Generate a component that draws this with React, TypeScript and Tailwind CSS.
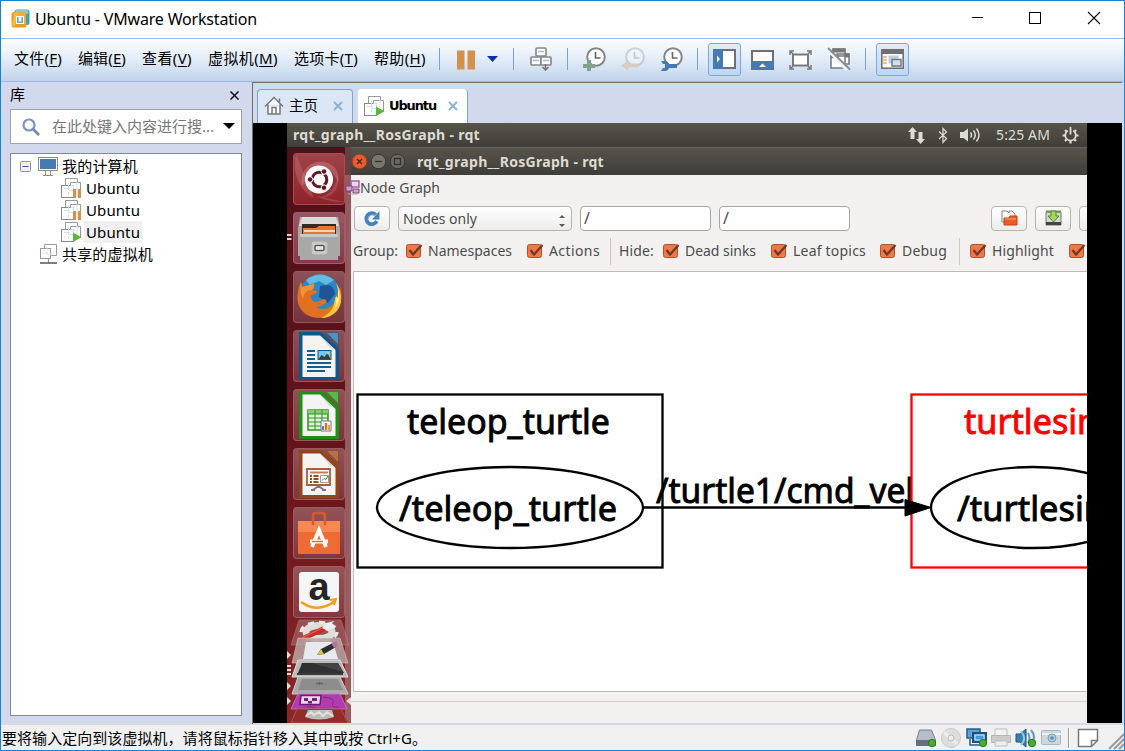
import { useLayoutEffect, useRef, type ReactNode } from "react";

/* Spreads a line of text evenly over the width that its class names set. */
function Fit({ className = "", children }: { className?: string; children: ReactNode }) {
  const box = useRef<HTMLSpanElement>(null);
  const inner = useRef<HTMLSpanElement>(null);
  useLayoutEffect(() => {
    if (!box.current || !inner.current) return;
    const count = (inner.current.textContent ?? "").length;
    inner.current.style.letterSpacing = "0px";
    const gap = box.current.clientWidth - inner.current.getBoundingClientRect().width;
    inner.current.style.letterSpacing = `${gap / Math.max(1, count)}px`;
  });
  return (
    <span ref={box} className={`block shrink-0 whitespace-nowrap ${className}`}>
      <span ref={inner}>{children}</span>
    </span>
  );
}

const WIN = "font-['Noto_Sans','Noto_Sans_CJK_SC',sans-serif]";
const CJK = "font-['Noto_Sans_CJK_SC',sans-serif]";

const menus = [
  { label: "文件", key: "F", width: "w-[48px]" },
  { label: "编辑", key: "E", width: "w-[48px]" },
  { label: "查看", key: "V", width: "w-[50px]" },
  { label: "虚拟机", key: "M", width: "w-[70px]" },
  { label: "选项卡", key: "T", width: "w-[64px]" },
  { label: "帮助", key: "H", width: "w-[52px]" },
];

function TitleBar() {
  return (
    <header className="flex h-[37px] shrink-0 items-center bg-white pl-[10px]">
      <svg className="mb-[2px]" width="19" height="20" viewBox="0 0 19 20">
        <rect x="3.500" y="0.500" width="15" height="15.500" rx="2.500" fill="#3f9fb8" />
        <rect x="4.500" y="1" width="13" height="4" rx="1.500" fill="#7fcbdc" />
        <path d="M2.500 3h3v11h10v2q0 2.500-2.500 2.500H2.500Q.5 18.500.5 16V5.500Q.5 3 2.500 3z" fill="#ec9a1d" />
        <path d="M5 3h8q2 0 2 2v10h-3V7H5z" fill="#f5ae32" />
        <path d="M1 16 3.500 3.500H6L4 18z" fill="#f8bb45" />
        <path d="M5 7h8v8H5z" fill="#fff" />
        <path d="M6 8.200h6v5.600H6z" fill="#45a5bd" />
        <path d="M7.500 8.200h3v4.300h-3z" fill="#fff" />
      </svg>
      <Fit className="mb-[2px] ml-[5px] w-[222px] text-[16px] leading-[20px] text-black">Ubuntu - VMware Workstation</Fit>
      <svg className="mb-[5px] ml-[715px]" width="131" height="17" viewBox="0 0 131 17" fill="none" stroke="#000">
        <path d="M0 8.500h11" />
        <rect x="57.500" y="3.500" width="11" height="11" />
        <path d="M116 3 128 15M128 3 116 15" strokeWidth="1.100" />
      </svg>
    </header>
  );
}

function Sep({ className }: { className: string }) {
  return <span className={`mb-[2px] h-[22px] w-px shrink-0 bg-[#7ba2d0] ${className}`} />;
}

function Clock({ faded, children }: { faded?: boolean; children: ReactNode }) {
  return (
    <g opacity={faded ? 0.3 : 1}>
      <circle cx="14" cy="10" r="8.800" fill="#fdfdfd" stroke="#858585" strokeWidth="2" />
      <path d="M13.500 5v6h5" fill="none" stroke="#666" strokeWidth="1.600" />
      {children}
    </g>
  );
}

function MenuBar() {
  return (
    <nav className="flex h-[44px] shrink-0 items-center border-y border-[#9cbbe2] bg-linear-to-b from-[#fbfdff] via-[#e2ecf8] to-[#c0d3ec] pl-[13px]">
      <div className={`mb-[4px] flex gap-[16px] text-[15px] leading-[20px] text-black ${WIN}`}>
        {menus.map((m) => (
          <Fit key={m.key} className={m.width}>
            {m.label}(<u className="underline-offset-2">{m.key}</u>)
          </Fit>
        ))}
      </div>
      <Sep className="ml-[13px]" />
      <svg className="mb-px ml-[16px] shrink-0" width="20" height="20" viewBox="0 0 20 20">
        <path d="M1 .5h7.500v19H1zM11.500.5H19v19h-7.500z" fill="#d3914b" />
      </svg>
      <svg className="mb-[3px] ml-[11px] shrink-0" width="11" height="6" viewBox="0 0 11 6">
        <path d="M0 0h11L5.500 6z" fill="#0b2fb3" />
      </svg>
      <Sep className="ml-[15px]" />
      <svg className="mb-[2px] ml-[15px] shrink-0" width="24" height="24" viewBox="0 0 24 24" fill="#fff" stroke="#858585" strokeWidth="1.600">
        <rect x="7" y="1" width="10" height="8" rx="1" />
        <rect x="2" y="10" width="10" height="8" rx="1" />
        <rect x="12" y="10" width="10" height="8" rx="1" />
        <path d="M9 4.500h6M4 13.500h6M14 13.500h6" stroke="#9dbbe0" />
        <path d="M16.500 17v6M13.500 20l3 3 3-3" fill="none" stroke="#777" />
      </svg>
      <Sep className="ml-[14px]" />
      <svg className="mb-[2px] ml-[14px] shrink-0" width="24" height="24" viewBox="0 0 24 24">
        <Clock><path d="M5 13h4v4h4v4H9v3H5v-3H1v-4h4z" fill="#80a38e" /></Clock>
      </svg>
      <svg className="mb-[2px] ml-[15px] shrink-0" width="24" height="24" viewBox="0 0 24 24">
        <Clock faded><path d="M0 18.500 7 13.500v3h10v4H7v3z" fill="#dd953e" /></Clock>
      </svg>
      <svg className="mb-[2px] ml-[14px] shrink-0" width="24" height="24" viewBox="0 0 24 24">
        <Clock>
          <path d="M2 14h4q3 0 4 3h8v4H10q-1 3-4 3H2l2-3h2v-4H4z" fill="#4279b2" />
        </Clock>
      </svg>
      <Sep className="ml-[14px]" />
      <span className="mb-[2px] ml-[10px] flex size-[33px] shrink-0 items-center justify-center rounded-[3px] border border-[#7da7dc] bg-linear-to-b from-[#e2ecfa] to-[#bdd6f8]">
        <svg width="23" height="20" viewBox="0 0 23 20">
          <rect x="1" y="1" width="21" height="18" fill="#fff" stroke="#707070" strokeWidth="2" />
          <path d="M0 0h10v20H0z" fill="#467ab2" />
          <path d="M4 6.500v7l3-3.500z" fill="#fff" />
        </svg>
      </span>
      <svg className="mb-px ml-[10px] shrink-0" width="24" height="20" viewBox="0 0 24 20">
        <rect x="1" y="1" width="21" height="18" fill="#fff" stroke="#707070" strokeWidth="2" />
        <path d="M0 11h23v9H0z" fill="#467ab2" />
        <path d="M8 17h7l-3.500-3.500z" fill="#fff" />
      </svg>
      <svg className="mb-px ml-[14px] shrink-0" width="24" height="20" viewBox="0 0 24 20" fill="none" stroke="#7a7a7a" strokeWidth="1.500">
        <rect x="4" y="4.500" width="15" height="11" fill="#fff" strokeWidth="2" />
        <path d="M1 5V1h4M1 1l3 3M18 1h4v4M22 1l-3 3M1 15v4h4M1 19l3-3M18 19h4v-4M22 19l-3-3" />
      </svg>
      <svg className="mb-[2px] ml-[14px] shrink-0" width="24" height="24" viewBox="0 0 24 24" fill="#fff" stroke="#777" strokeWidth="1.500">
        <rect x="6" y="2" width="12" height="13" />
        <path d="M5.500 3.500h13" strokeWidth="4" />
        <rect x="10" y="7" width="12" height="10" />
        <path d="M17 8.500h5.500" strokeWidth="4" />
        <rect x="4" y="9" width="14" height="12" />
        <path d="M3.500 9.500h8" strokeWidth="3.500" />
        <path d="M1 3 20 23" stroke="#eef3fa" strokeWidth="3" />
        <path d="M1 1 23 22.500" stroke="#888f98" strokeWidth="2" />
      </svg>
      <Sep className="ml-[14px]" />
      <span className="mb-[2px] ml-[10px] flex size-[33px] shrink-0 items-center justify-center rounded-[3px] border border-[#7da7dc] bg-linear-to-b from-[#e2ecfa] to-[#bdd6f8]">
        <svg width="23" height="20" viewBox="0 0 23 20">
          <rect x="0.800" y="0.800" width="21.400" height="18.400" fill="#fff" stroke="#707070" strokeWidth="1.600" />
          <path d="M0 0h23v5H0z" fill="#707070" />
          <path d="M2 8h4M2 11h4M2 14h4" stroke="#e8c58c" strokeWidth="1.800" />
          <rect x="7.500" y="6.500" width="10" height="8" fill="#b9cfe9" />
          <rect x="11" y="10.500" width="9" height="6.500" fill="#cfdff3" stroke="#777" strokeWidth="1.500" />
        </svg>
      </span>
    </nav>
  );
}

function VmIcon({ state }: { state?: "paused" | "running" }) {
  return (
    <svg className="shrink-0" width="21" height="20" viewBox="0 0 21 20" fill="none">
      <path d="M4.500 7V.5h12v4M19.500 16V4.500h-10V7" stroke="#999" />
      <rect x="0.500" y="7.500" width="12" height="12" stroke="#888" />
      <path d="M9.500 7.500h3v5h-5V4.500M3 10.500h6M16 4v8M7.500 14v3" stroke="#d3dff0" />
      {state === "paused" && <path d="M12 11h3.200v9H12zM16.800 11H20v9h-3.200z" fill="#d3914b" />}
      {state === "running" && <path d="M12 10.500v9.500l8.500-4.800z" fill="#55ba3b" />}
    </svg>
  );
}

function Library() {
  return (
    <aside className="flex w-[251px] shrink-0 flex-col bg-[#d3d9ed] pr-[10px] pl-[9px]">
      <div className="flex h-[27px] shrink-0 items-center justify-between pr-[3px] pb-[3px] text-black">
        <span className={`text-[15px] leading-[20px] ${CJK}`}>库</span>
        <svg className="mt-[3px]" width="9" height="9" viewBox="0 0 9 9"><path d="M.5.5l8 8M8.500.5l-8 8" stroke="#000" strokeWidth="1.400" /></svg>
      </div>
      <div className="flex h-[35px] shrink-0 items-center border border-[#a0a2a8] bg-white pl-[11px]">
        <svg width="18" height="18" viewBox="0 0 18 18" fill="none">
          <circle cx="7" cy="7" r="5.500" stroke="#7c93bd" strokeWidth="2.200" />
          <path d="m11 11 6 6" stroke="#7288b0" strokeWidth="2.600" />
        </svg>
        <Fit className={`mb-[2px] ml-[12px] w-[162px] text-[15px] leading-[20px] text-[#767676] ${WIN}`}>在此处键入内容进行搜...</Fit>
        <svg className="mb-[2px] ml-[9px]" width="12" height="6" viewBox="0 0 12 6"><path d="M0 0h12L6 6z" fill="#000" /></svg>
      </div>
      <div className={`mt-[9px] h-[563px] border border-[#828790] bg-white pt-px text-[15px] leading-[20px] text-black ${WIN}`}>
        <div className="flex h-[22px] items-center pl-[9px]">
          <svg width="11" height="11" viewBox="0 0 11 11"><rect x=".5" y=".5" width="10" height="10" rx="1" fill="#efefef" stroke="#919191" /><path d="M2.500 5.500h6" stroke="#3c52a0" /></svg>
          <svg className="ml-[7px]" width="20" height="19" viewBox="0 0 20 19">
            <rect x=".5" y=".5" width="19" height="13" fill="#fff" stroke="#8c8c8c" />
            <path d="M2 2h16v10H2z" fill="#467ab2" />
            <path d="M7.500 14v4M12.500 14v4M5 18.500h10" stroke="#8c8c8c" />
          </svg>
          <Fit className="ml-[4px] w-[76px]">我的计算机</Fit>
        </div>
        {(["paused", "paused", "running"] as const).map((state, i) => (
          <div key={i} className="flex h-[22px] items-center pl-[50px]">
            <VmIcon state={state} />
            <span className={state === "running" ? "ml-[2px] flex h-[22px] w-[58px] items-center bg-[#f0f0f0] pl-[2px]" : "ml-[2px] pl-[2px]"}>
              <Fit className="w-[54px]">Ubuntu</Fit>
            </span>
          </div>
        ))}
        <div className="flex h-[22px] items-center pl-[29px]">
          <svg width="18" height="20" viewBox="0 0 18 20" fill="none" stroke="#999">
            <path d="M4.500 4V.5h12v11h-5" /><rect x=".5" y="4.500" width="10" height="10" />
            <path d="M7 3v7h7M3 9h5" stroke="#dbe4f2" />
            <path d="M8.500 15v4" /><path d="M0 19h17" stroke="#555" strokeWidth="1.500" />
          </svg>
          <Fit className="ml-[4px] w-[91px]">共享的虚拟机</Fit>
        </div>
      </div>
    </aside>
  );
}

function TabClose() {
  return <svg width="10" height="10" viewBox="0 0 10 10"><path d="m1 1 8 8M9 1 1 9" stroke="#8fb3d1" strokeWidth="2" /></svg>;
}

function Tabs() {
  return (
    <div className="flex h-[40px] shrink-0 items-end gap-[5px] bg-[#d3d9ed] pl-[4px] text-black">
      <div className="flex h-[34px] w-[96px] items-center rounded-t-[4px] border border-b-0 border-[#7fa3c9] bg-[#dbe7f5] pb-[2px] pl-[6px]">
        <svg width="20" height="19" viewBox="0 0 20 19" fill="none" stroke="#777" strokeWidth="1.500">
          <path d="M1 10.500 10 1.500l9 9M4 8.500v9.500h12V8.500" fill="#f8fafc" />
          <path d="M8 18v-6.500h4V18M15.500 6V2.500" />
        </svg>
        <span className={`mb-[2px] ml-[5px] w-[32px] text-[14.500px] leading-[20px] ${CJK}`}>主页</span>
        <span className="ml-[12px]"><TabClose /></span>
      </div>
      <div className="flex h-[34px] w-[110px] items-center rounded-t-[4px] border-r border-[#7fa3c9] bg-white pb-px pl-[6px]">
        <VmIcon state="running" />
        <Fit className="ml-[4px] w-[47px] font-['DejaVu_Sans'] text-[13px] leading-[20px] font-bold">Ubuntu</Fit>
        <span className="ml-[12px]"><TabClose /></span>
      </div>
    </div>
  );
}

function TopPanel() {
  return (
    <div className="flex h-[24px] shrink-0 items-center bg-linear-to-b from-[#57544a] to-[#3f3e39] pl-[6px] text-[#dfdbd2]">
      <Fit className="w-[187px] text-[14px] leading-[20px] font-bold">rqt_graph__RosGraph - rqt</Fit>
      <svg className="ml-[428px]" width="17" height="17" viewBox="0 0 17 17" fill="#dfdbd2">
        <path d="M4.500 0 9 5H6.500v7h-4V5H0zM10.500 5h4v7H17l-4.500 5L8 12h2.500z" />
      </svg>
      <svg className="ml-[13px]" width="10" height="17" viewBox="0 0 10 17" fill="none" stroke="#dfdbd2" strokeWidth="1.200">
        <path d="m1 4.500 7.500 7L5 15.500v-14l3.500 3.500L1 12" />
      </svg>
      <svg className="ml-[12px]" width="21" height="16" viewBox="0 0 21 16" fill="none" stroke="#dfdbd2" strokeWidth="1.500">
        <path d="M0 5h3.500L8 1.500v13L3.500 11H0z" fill="#dfdbd2" stroke="none" />
        <path d="M10.500 5.500q2 2.500 0 5M13.500 3.500q3.500 4.500 0 9M16.500 1.500q5 6.500 0 13" />
      </svg>
      <Fit className="ml-[15px] w-[54px] text-[14px] leading-[20px]">5:25 AM</Fit>
      <svg className="ml-[12px]" width="17" height="17" viewBox="0 0 17 17" fill="none" stroke="#dfdbd2">
        <path d="M5.700 3.800a5.300 5.300 0 1 0 5.600 0" strokeWidth="1.800" />
        <path d="M8.500 0v7.500" strokeWidth="1.800" />
        <path d="M.5 8.500H3M14 8.500h2.500M8.500 14v2.500M3 14l1.500-1.500M14 14l-1.500-1.500M3 3l1.500 1.500M14 3l-1.500 1.500" strokeWidth="2.200" />
      </svg>
    </div>
  );
}

function Tile({ tint = "bg-[#8b4a50]/60", children }: { tint?: string; children: ReactNode }) {
  return (
    <div className={`relative size-[52px] shrink-0 rounded-[4px] border border-white/20 ${tint}`}>
      <div className="absolute inset-0 rounded-[3px] bg-linear-to-b from-white/15 to-transparent" />
      <svg className="relative" width="50" height="50" viewBox="0 0 50 50">{children}</svg>
    </div>
  );
}

function Doc({ color, fold, children }: { color: string; fold: string; children: ReactNode }) {
  return (
    <>
      <path d="M5 1h22l18 17v31H5z" fill={color} />
      <path d="M27 1h16q2 0 2 2v15L27 1z" fill={color} opacity=".45" />
      <path d="M33 2h10q1 0 1 1v10z" fill={fold} />
      <path d="M8.500 4.500H26L41.500 19v27h-33z" fill="#f4f4f4" />
      <path d="M26 4.500 41.500 19l-6-3z" fill="#d4d4d4" />
      {children}
    </>
  );
}

function StackedTiles() {
  return (
    <svg className="absolute top-[470px] left-0" width="64" height="106" viewBox="287 617 64 106">
      <path d="M299 620h42l8 25h-58z" fill="#a06064" opacity=".75" stroke="#c49696" strokeWidth=".6" />
      <ellipse cx="319" cy="632" rx="13" ry="6.500" fill="none" stroke="#dededb" strokeWidth="7" />
      <ellipse cx="319" cy="632" rx="18" ry="9.500" fill="none" stroke="#e6e6e2" strokeWidth="3.500" strokeDasharray="6 5" />
      <path d="m300 640 23-11" stroke="#cf2b24" strokeWidth="5" strokeLinecap="round" />
      <path d="m302 638 20-10" stroke="#ec6a5f" strokeWidth="1" />
      <path d="m322 628 4-5 8-2-3 4 5 1-8 5z" fill="#ededed" />
      <path d="M298 638h42l8 25h-56z" fill="#b7a5a6" opacity=".85" stroke="#ddd" strokeWidth=".6" />
      <path d="M306 642h27l5 17h-35z" fill="#e9eaf0" />
      <path d="m317 655 4-6 12-6 3 4-12 7z" fill="#2c2c2c" />
      <path d="m317 655 4-6 3 5z" fill="#d5c744" />
      <path d="m331 643 5-2 2 4-4 3z" fill="#b672a4" />
      <path d="M298 660h42l8 17h-56z" fill="#bababa" stroke="#dedede" />
      <path d="M302 663h36l6 10h-46z" fill="#303030" />
      <path d="M312 663h26l5 9z" fill="#444" />
      <path d="M297 674h46" stroke="#111" strokeWidth="1.500" />
      <path d="M298 677h42l8 17h-56z" fill="#aaa" stroke="#ccc" />
      <path d="M302 679h36l5 11h-45z" fill="#8d8d8d" />
      <path d="M316 683.500h7m-3.500-1.500v3" stroke="#666" strokeWidth="1.500" />
      <path d="M298 694h42l7 15h-56z" fill="#b33bb0" stroke="#c66ac1" />
      <path d="M301 695.500h20l-1 9h-20z" fill="#eed7ed" stroke="#6b1975" strokeWidth="1.500" />
      <path d="M304 698h4v3h-4zM312 698h5v3h-5zM308 701h4v2.500h-4z" fill="#74207a" />
      <path d="M307 707h8M323 697q13 1 10 6t6 4" stroke="#7a2e7c" fill="none" />
      <path d="M297 709h44l7 14h-57z" fill="#942b2b" stroke="#ad5450" />
      <path d="M308 710h24l2 7q-15 5-29 0z" fill="#bdbdb5" />
      <path d="m306 716 5-4 3 3 5-3 4 4 4-4 6 4" stroke="#e2e2dc" strokeWidth="2" fill="none" />
      <path d="M287 651v8l4-4zM287 682v8l4-4zM287 697v8l4-4zM351 697v8l-5-4zM287 665h4v2h-4zM287 669h4v2h-4zM287 673h4v2h-4z" fill="#e4d9da" />
    </svg>
  );
}

function Launcher() {
  return (
    <div className="relative z-10 flex h-[576px] w-[64px] shrink-0 flex-col gap-[7px] bg-linear-to-b from-[#4e1019] via-[#64131b] to-[#8c2626] pt-[6px] pl-[6px]">
      <div className="absolute inset-y-0 right-0 flex w-[6px] flex-col">
        <span className="h-[28px] bg-[#673f42]" />
        <span className="flex-1 bg-linear-to-b from-[#95595e] to-[#9c5d5e]" />
      </div>
      <svg className="absolute top-[33px] left-[58px]" width="15" height="16" viewBox="0 0 15 16">
        <path d="M6 1h8v6H6z" fill="#e9d8e9" stroke="#a063a2" strokeWidth="1.500" />
        <path d="M1 6h6v5H1zM8 9h6v4H8z" fill="#c9a3c6" stroke="#813c83" />
        <path d="M3 14h9" stroke="#aaa" />
      </svg>
      <Tile tint="bg-[#8f222a]">
        <path d="M8 32C5 16 18 4 34 9q12 5 10 20C40 14 24 6 8 32z" fill="#e09a98" opacity=".35" />
        <path d="M44 20c3 16-8 27-24 23 14 2 22-9 24-23zM2 0c-4 20 3 36 18 44M50 48c-12 0-20-2-26-6" fill="#e09a98" opacity=".25" />
        <circle cx="25" cy="25.500" r="14" fill="#fff" />
        <circle cx="25.500" cy="25.500" r="7.300" fill="none" stroke="#671720" strokeWidth="3" strokeDasharray="13.300 2" strokeDashoffset="6.500" />
        <g fill="#671720" stroke="#fff" strokeWidth="1"><circle cx="16" cy="25.500" r="2.800" /><circle cx="30" cy="17.500" r="2.800" /><circle cx="30" cy="33.700" r="2.800" /></g>
      </Tile>
      <Tile tint="bg-[#86394a]">
        <path d="M6 4h38l2 12v27H4V16z" fill="#aaa9a5" />
        <path d="M8 4h34l3 9H5z" fill="#dadad8" />
        <path d="M8 11h34v12H8z" fill="#342924" />
        <path d="M9 15h13l3-2h16v9H9z" fill="#e97629" />
        <path d="M10 18h31" stroke="#fff4db" strokeWidth="1.500" />
        <path d="M6 21h38v26H6z" fill="#a8a8a6" /><path d="M6 21h38v3H6z" fill="#c8c8c6" />
        <rect x="19" y="30" width="13" height="10" rx="1" fill="#ddd" stroke="#c8c8c8" strokeWidth="2.500" />
        <rect x="21" y="32.500" width="9" height="5" rx="1" fill="#ededed" stroke="#555" strokeWidth="1.500" />
      </Tile>
      <Tile>
        <circle cx="26" cy="23" r="20.500" fill="#2d87c6" />
        <path d="M12 8Q26-3 40 8l-8 5-7-4-9 4z" fill="#5fbde2" />
        <path d="M26 14q14-4 15 8l-7 9-9-6z" fill="#1f5595" />
        <path d="M46 15c5 17-4 31-21 31C10 46 1 34 4 20q0-5 3-10l1 5 8-2 4-1q1 3-2 6l5 1q0 3-6 4-1 7 6 7l7-3q5 1 0 5-3 3-8 3c10 6 20-2 21-12z" fill="#e36f20" />
        <path d="M7 10 8 15l8-2 4-1q1 3-2 6-8 0-9 9-4-8-2-17z" fill="#ee9436" />
        <path d="M42 11q6 8 5 19c-2 10-10 16-20 16 11-5 14-13 14-21l3 2q1-8-2-16z" fill="#fcc63a" />
        <path d="M44 16q4 13-4 22 3-8 2-14l2 2z" fill="#fff08b" />
      </Tile>
      <Tile>
        <Doc color="#0d578b" fold="#4b94bf">
          <path d="M13 20h8M13 24h8M13 28h8M13 32h24M13 36h24M13 40h18" stroke="#145f91" strokeWidth="2.200" />
          <rect x="24" y="19.500" width="13" height="9" fill="#79c4ee" stroke="#0a5b94" />
          <path d="m24.500 28 3-4 3 2 3-4 3 6z" fill="#373f41" /><circle cx="34" cy="22" r="1.300" fill="#f4c64a" />
        </Doc>
      </Tile>
      <Tile>
        <Doc color="#209014" fold="#56ba49">
          <path d="M14 20h20v20H14z" fill="#dff1d9" stroke="#309220" strokeWidth="1.500" />
          <path d="M14 20h20v4H14z" fill="#88c975" /><path d="M14 24h20M14 28h20M14 32h20M14 36h20M21 20v20M28 20v20" stroke="#309220" />
          <path d="M27 31h10v10H27z" fill="#fff" stroke="#777" /><path d="M29 36v4" stroke="#3188cb" strokeWidth="2" /><path d="M32 33v7" stroke="#e56b1f" strokeWidth="2.500" /><path d="M35 35v5" stroke="#e3a037" strokeWidth="2" />
        </Doc>
      </Tile>
      <Tile>
        <Doc color="#93441b" fold="#ba7043">
          <path d="M13 20h23v16H13z" fill="#fff" stroke="#b05c30" strokeWidth="1.800" />
          <path d="M16 23.500h18" stroke="#d37b47" strokeWidth="2" /><path d="M16 27h2M16 30h2M16 33h2M19.500 27h5M19.500 30h5M19.500 33h5" stroke="#984723" strokeWidth="2" />
          <path d="M26.500 26.500h8v7h-8z" fill="#fff" stroke="#999" /><path d="m28 31.500 2-2 2 1 2-4" stroke="#2d9c39" fill="none" />
          <path d="m19 41 5.500-4 5.500 4M17 41h4M28 41h4" stroke="#777" fill="none" strokeWidth="1.800" />
        </Doc>
      </Tile>
      <Tile>
        <path d="M4 13h42v33H4z" fill="#ee6c33" /><path d="M4 13h42v11H4z" fill="#f48a51" />
        <path d="M19 17V8q0-3 3-3h6q3 0 3 3v9" fill="none" stroke="#d65b2c" strokeWidth="2.500" />
        <path d="m18 39 7-17 7 17" fill="none" stroke="#fff" strokeWidth="3.800" /><path d="M16 33.500h18" stroke="#fff" strokeWidth="4" /><path d="M18 33.500h11" stroke="#ed6f39" strokeWidth="1.500" />
      </Tile>
      <Tile>
        <rect x="5" y="5" width="40" height="40" rx="3" fill="#f5f5f5" />
        <text x="25" y="33" textAnchor="middle" fontFamily="Liberation Sans" fontWeight="700" fontSize="38" fill="#252525">a</text>
        <path d="M7 35q17 12 34-1" fill="none" stroke="#f49b19" strokeWidth="2.500" /><path d="m36 33 6-1-2 6" fill="none" stroke="#f49b19" strokeWidth="2" />
      </Tile>
      <StackedTiles />
      <svg className="absolute top-[86px] left-0" width="5" height="10" viewBox="0 0 5 10"><path d="M0 1h4l1 1-1 1H0zM0 5h4l1 1-1 1H0z" fill="#e0d5d6" /></svg>
    </div>
  );
}

function Check({ label, width, className = "" }: { label?: string; width?: string; className?: string }) {
  return (
    <span className={`flex shrink-0 items-center ${className}`}>
      <svg className="shrink-0" width="17" height="16" viewBox="0 0 17 16">
        <rect x=".5" y="1.500" width="14" height="13" rx="2" fill="#f07746" stroke="#ae512f" />
        <path d="m3.500 7 3.500 4.500L15.500 2" fill="none" stroke="#6d3a29" strokeWidth="2.300" />
      </svg>
      {label && <Fit className={`ml-[5px] ${width}`}>{label}</Fit>}
    </span>
  );
}

const button = "flex h-[25px] w-[36px] shrink-0 items-center justify-center rounded-[4px] border border-[#b8b3ad] bg-linear-to-b from-white to-[#ececeb]";
const field = "h-[25px] w-[131px] rounded-[4px] border border-[#aaa69f] bg-white pl-[3px] text-[16px] leading-[23px]";

function Graph() {
  return (
    <svg width="733" height="419" viewBox="354 272 733 419" fontFamily="Noto Sans" fontSize="35" fill="none" stroke="#000" strokeWidth="2.300">
      <rect x="357.500" y="394.500" width="305" height="173" />
      <ellipse cx="510" cy="507.500" rx="133" ry="40.500" />
      <g fill="#000" strokeWidth=".9">
        <text x="407" y="434" textLength="203" lengthAdjust="spacingAndGlyphs">teleop_turtle</text>
        <text x="399" y="520.500" textLength="218" lengthAdjust="spacingAndGlyphs">/teleop_turtle</text>
        <text x="656" y="503" textLength="258" lengthAdjust="spacingAndGlyphs">/turtle1/cmd_vel</text>
      </g>
      <rect x="911.500" y="394.500" width="244" height="173" fill="#fff" stroke="#f00" />
      <path d="M643 507.500h265" />
      <path d="M905 499.500 931 507.500 905 516z" fill="#000" strokeWidth="1" />
      <ellipse cx="1033" cy="507.500" rx="102" ry="40.500" />
      <text x="964" y="434" textLength="145" lengthAdjust="spacingAndGlyphs" fill="#f00" stroke="#f00" strokeWidth=".9">turtlesim</text>
      <text x="957" y="520.500" textLength="159" lengthAdjust="spacingAndGlyphs" fill="#000" strokeWidth=".9">/turtlesim</text>
    </svg>
  );
}

function RosWindow() {
  return (
    <div className="flex w-[736px] shrink-0 flex-col overflow-hidden bg-[#f2f1f0] text-[14px] leading-[20px] text-[#4c4c4c]">
      <div className="flex h-[28px] shrink-0 items-center border-t border-[#65625a] bg-linear-to-b from-[#57544b] to-[#3e3d39] text-[#dfdbd2]">
        <svg width="56" height="18" viewBox="0 0 56 18" fill="none">
          <circle cx="8.500" cy="8.500" r="7.300" fill="#e95c2f" stroke="#9e3d22" /><path d="m6 6 5 5m0-5-5 5" stroke="#4c241a" strokeWidth="1.300" />
          <circle cx="27.500" cy="8.500" r="7.300" fill="#78766e" stroke="#33322e" /><path d="M24 8.500h7" stroke="#302f2b" strokeWidth="1.300" />
          <circle cx="46.500" cy="8.500" r="7.300" fill="#6b6962" stroke="#33322e" /><rect x="43.500" y="5.500" width="6" height="6" stroke="#302f2b" strokeWidth="1.300" />
        </svg>
        <Fit className="ml-[10px] w-[187px] font-bold">rqt_graph__RosGraph - rqt</Fit>
      </div>
      <div className="flex h-[31px] shrink-0 items-center pb-[6px] pl-[9px]"><Fit className="w-[80px]">Node Graph</Fit></div>
      <div className="flex h-[25px] shrink-0 items-center pl-[3px]">
        <span className={button}>
          <svg width="18" height="18" viewBox="0 0 16 17" fill="none"><path d="M12.500 10.500a5.200 5.200 0 1 1-1-6" stroke="#4582bb" strokeWidth="3.500" /><path d="M15 1v8H8z" fill="#4582bb" /><path d="M4 9a5 5 0 0 1 7-4" stroke="#7db2df" /></svg>
        </span>
        <span className="ml-[8px] flex h-[25px] w-[174px] shrink-0 items-center rounded-[4px] border border-[#b8b3ad] bg-linear-to-b from-white to-[#ececeb] pl-[4px]">
          <Fit className="w-[74px]">Nodes only</Fit>
          <svg className="mt-[4px] ml-[82px]" width="6" height="12" viewBox="0 0 6 12"><path d="M0 3h6L3 0zM0 9h6l-3 3z" fill="#5a5a5a" /></svg>
        </span>
        <span className={`ml-[8px] shrink-0 ${field}`}>/</span>
        <span className={`ml-[8px] shrink-0 ${field}`}>/</span>
        <span className={`ml-[141px] ${button}`}>
          <svg className="mb-px" width="17" height="17" viewBox="0 0 17 17"><path d="M1 1h5l2 2V1h3l3 3v8H1z" fill="#f7f7f7" stroke="#888" /><path d="M3 8h5l1-2h7v9H3z" fill="#e75c2a" stroke="#c64317" /><path d="M4 9h11" stroke="#ff9a68" /></svg>
        </span>
        <span className={`ml-[8px] ${button}`}>
          <svg className="mb-px" width="17" height="16" viewBox="0 0 17 16"><path d="M1 2h15v13H1z" fill="#d6d7d4" stroke="#777" /><path d="M1 12h15v3H1z" fill="#444" /><path d="M1 1.500h15" stroke="#66993c" strokeWidth="2" /><path d="M6 1h5v5h3l-5.500 6L3 6h3z" fill="#a6d55a" stroke="#54852f" /></svg>
        </span>
        <span className={`ml-[8px] ${button}`} />
      </div>
      <div className="flex h-[40px] shrink-0 items-center pl-[2px]">
        <Fit className="w-[45px]">Group:</Fit>
        <Check className="ml-[8px]" label="Namespaces" width="w-[84px]" />
        <Check className="ml-[15px]" label="Actions" width="w-[51px]" />
        <span className="ml-[10px] h-[27px] w-px shrink-0 bg-[#cbc7c2]" />
        <Fit className="ml-[8px] w-[35px]">Hide:</Fit>
        <Check className="ml-[9px]" label="Dead sinks" width="w-[71px]" />
        <Check className="ml-[15px]" label="Leaf topics" width="w-[73px]" />
        <Check className="ml-[14px]" label="Debug" width="w-[45px]" />
        <span className="ml-[12px] h-[27px] w-px shrink-0 bg-[#cbc7c2]" />
        <Check className="ml-[10px]" label="Highlight" width="w-[62px]" />
        <Check className="ml-[15px]" />
      </div>
      <div className="ml-[2px] h-[421px] shrink-0 border border-r-0 border-[#bdb9b5] bg-white"><Graph /></div>
      <div className="h-[10px] shrink-0 border-b border-[#d3d0cc]" />
    </div>
  );
}

function StatusBar() {
  return (
    <footer className="flex h-[26px] shrink-0 items-center border-t border-[#dadada] bg-[#f0f0f0] pl-px text-[15px] leading-[20px] text-black">
      <Fit className={`w-[425px] ${WIN}`}>要将输入定向到该虚拟机，请将鼠标指针移入其中或按 Ctrl+G。</Fit>
      <svg className="ml-[488px]" width="209" height="24" viewBox="915 726 209 24" fill="none">
        <path d="M919.500 730h12l4 10v5h-19v-5z" fill="#b6bdc8" stroke="#73808e" /><path d="M916 740h20v6h-20z" fill="#656f7c" />
        <circle cx="951" cy="738" r="9.500" fill="#dedede" stroke="#c9c9c9" /><path d="m944 732 7 6 6 6" stroke="#eee" strokeWidth="3" /><circle cx="951" cy="738" r="3" fill="#eee" stroke="#bbb" />
        <path d="M967 729h13v9h-13z" fill="#5da3d2" stroke="#255b8c" strokeWidth="1.500" /><path d="M973 733h13v9h-13z" fill="#3a9ce4" stroke="#244f77" strokeWidth="2" /><path d="M975 735h9v5h-9z" stroke="#d6ecfa" /><path d="M970 739v6h10" stroke="#255b8c" strokeWidth="1.500" />
        <path d="M995 729h12v7h-12z" fill="#f2f2f2" stroke="#bdbdbd" /><path d="M991.500 735.500h19v7h-19z" fill="#cbcbcb" stroke="#b5b5b5" /><path d="M995 741h12v5h-12z" fill="#eee" stroke="#bdbdbd" />
        <path d="M1016 734h4l6-5v18l-6-5h-4z" fill="#367fae" stroke="#255474" /><path d="M1021 731c4 5 4 10 0 14" stroke="#90c9e7" strokeWidth="2" /><path d="M1028 733q3 5 0 10M1031 730q6 7 0 14" stroke="#6395c4" strokeWidth="2" />
        <rect x="1041.500" y="730.500" width="19" height="14" rx="1" fill="#cbd8df" stroke="#a9b8c0" /><path d="M1042 734h19" stroke="#eef4f7" strokeWidth="2" /><circle cx="1052" cy="738" r="4" fill="#afd0e1" stroke="#839cac" /><circle cx="1052" cy="738" r="1.800" fill="#568cac" />
        <g fill="#50a82c" stroke="#2c771b"><circle cx="932" cy="743" r="3.700" /><circle cx="983" cy="743" r="3.700" /><circle cx="1032" cy="743" r="3.700" /></g>
        <path d="M1068.500 728v20" stroke="#9b9b9b" /><path d="M1069.500 728v20" stroke="#fff" />
        <path d="M1078.500 729.500h19v11l-6 6h-13z" fill="#fff" stroke="#777" strokeWidth="1.500" /><path d="M1091.500 746v-5.500h6" stroke="#777" strokeWidth="1.500" />
        <path d="m1109 749 15-15M1114 749l10-10M1119 749l5-5" stroke="#9b9b9b" strokeWidth="2" />
      </svg>
    </footer>
  );
}

export default function App() {
  return (
    <div className="flex h-[751px] w-[1125px] flex-col overflow-hidden border border-[#1a82d6] bg-[#d3d9ed] font-['Noto_Sans',sans-serif]">
      <TitleBar />
      <MenuBar />
      <div className="flex h-[642px] shrink-0">
        <Library />
        <main className="flex w-[870px] shrink-0 flex-col border-t border-l border-[#6e6e70]">
          <Tabs />
          <div className="flex h-[600px] shrink-0 bg-black pl-[34px]">
            <div className="flex w-[800px] shrink-0 flex-col overflow-hidden">
              <TopPanel />
              <div className="flex h-[576px] shrink-0">
                <Launcher />
                <RosWindow />
              </div>
            </div>
          </div>
        </main>
      </div>
      <StatusBar />
    </div>
  );
}
